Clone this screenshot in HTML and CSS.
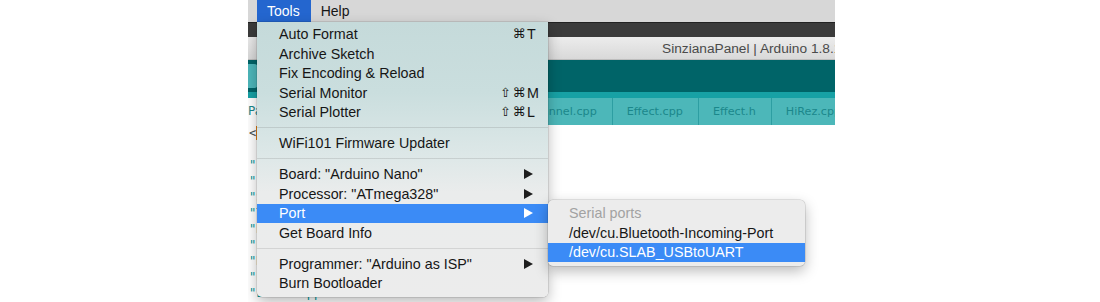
FILE: index.html
```html
<!DOCTYPE html>
<html lang="en">
<head>
  <meta charset="UTF-8" />
  <title>Arduino Tools menu</title>
  <link rel="stylesheet" href="styles.css">
</head>
<body>
  <div class="shot">
    <div class="menubar">
      <span class="mb-item active">Tools</span>
      <span class="mb-item">Help</span>
    </div>

    <div class="window">
      <div class="win-strip"></div>
      <div class="titlebar">SinzianaPanel | Arduino 1.8.1</div>
      <div class="toolbar">
        <div class="tb-btn"></div>
      </div>
      <div class="tabs">
        <div class="tab active">Panel</div>
        <div class="tab">Animations.cpp</div>
        <div class="tab">Bitmaps.cpp</div>
        <div class="tab">Channel.cpp</div>
        <div class="tab">Effect.cpp</div>
        <div class="tab">Effect.h</div>
        <div class="tab">HiRez.cpp</div>
      </div>
      <div class="editor">
        <div class="line"><span class="op">&lt;</span><span class="caret">F</span></div>
        <div class="line"></div>
        <div class="line str">"FastLED.h"</div>
        <div class="line str">"--------"</div>
        <div class="line str">"Serial.cpp"</div>
        <div class="line str">"Timer.cpp"</div>
        <div class="line str">"Display.cpp"</div>
        <div class="line str">"Effect.cpp"</div>
        <div class="line str">"HiRez.cpp"</div>
        <div class="line str">"Effect.h"</div>
        <div class="line str">"LEDFX.cpp"</div>
      </div>
    </div>

    <div class="menu">
      <div class="item">Auto Format<span class="keys"><span class="mod">⌘</span><span class="key">T</span></span></div>
      <div class="item">Archive Sketch</div>
      <div class="item">Fix Encoding &amp; Reload</div>
      <div class="item">Serial Monitor<span class="keys"><span class="mod">⇧⌘</span><span class="key">M</span></span></div>
      <div class="item">Serial Plotter<span class="keys"><span class="mod">⇧⌘</span><span class="key">L</span></span></div>
      <div class="sep"></div>
      <div class="item">WiFi101 Firmware Updater</div>
      <div class="sep"></div>
      <div class="item">Board: "Arduino Nano"<svg class="arrow" width="9" height="10" viewBox="0 0 9 10"><polygon points="0,0 9,5 0,10" /></svg></div>
      <div class="item">Processor: "ATmega328"<svg class="arrow" width="9" height="10" viewBox="0 0 9 10"><polygon points="0,0 9,5 0,10" /></svg></div>
      <div class="item selected">Port<svg class="arrow" width="9" height="10" viewBox="0 0 9 10"><polygon points="0,0 9,5 0,10" /></svg></div>
      <div class="item">Get Board Info</div>
      <div class="sep"></div>
      <div class="item">Programmer: "Arduino as ISP"<svg class="arrow" width="9" height="10" viewBox="0 0 9 10"><polygon points="0,0 9,5 0,10" /></svg></div>
      <div class="item">Burn Bootloader</div>
    </div>

    <div class="submenu">
      <div class="item disabled">Serial ports</div>
      <div class="item">/dev/cu.Bluetooth-Incoming-Port</div>
      <div class="item selected">/dev/cu.SLAB_USBtoUART</div>
    </div>
  </div>
</body>
</html>
```

FILE: styles.css
```css
* {
  box-sizing: border-box;
  margin: 0;
  padding: 0;
}

body {
  background: #fff;
  font-family: 'Liberation Sans', Arial, sans-serif;
  color: #161616;
}

.shot {
  position: relative;
  margin-left: 248px;
  width: 587px;
  height: 302px;
  overflow: hidden;
}

/* top system menu bar */
.menubar {
  display: flex;
  height: 22px;
  padding-left: 9px;
  background: #d7d7d7;
  font-size: 14px;
}

.mb-item {
  padding: 0 10px;
  line-height: 22px;
  color: #161616;
}

.mb-item.active {
  padding-right: 11px;
  background: #2466cf;
  color: #fff;
}

/* arduino window behind the menu */
.win-strip {
  height: 15px;
  background: #3b3b3b;
  border-top: 1px solid #222;
}

.titlebar {
  height: 23px;
  padding-left: 414px;
  background: linear-gradient(#ececec, #d9d9d9);
  border-bottom: 1px solid #bdbdbd;
  font-size: 13.7px;
  line-height: 23px;
  color: #4a4a4a;
  white-space: nowrap;
}

.toolbar {
  display: flex;
  align-items: center;
  height: 32px;
  background: #006468;
}

.tb-btn {
  width: 24px;
  height: 24px;
  margin-left: -14px;
  border-radius: 4px;
  background: #4db7bb;
}

.tabs {
  display: flex;
  height: 33px;
  padding-top: 6px;
  background: #17a1a5;
  white-space: nowrap;
}

.tab {
  height: 27px;
  padding: 0 15px 0 14px;
  background: #4cb7b9;
  border-right: 1px solid #2d9ea2;
  font-family: 'DejaVu Sans', sans-serif;
  font-size: 11.2px;
  line-height: 27px;
  color: #1b878b;
}

.tab.active {
  padding-left: 0;
  background: #fff;
  font-size: 12px;
}

.editor {
  background: #fff;
  font-family: 'DejaVu Sans Mono', monospace;
  font-size: 12px;
  padding-left: 1px;
}

.line {
  height: 16px;
  line-height: 16px;
  white-space: nowrap;
}

.line .op {
  color: #434f54;
}

.line .caret {
  background: #e9800f;
  color: #fff;
}

.str {
  color: #00979c;
}

/* dropdown menus */
.menu {
  position: absolute;
  left: 9px;
  top: 22px;
  width: 291px;
  padding: 2.5px 0 4px;
  border-radius: 0 0 5px 5px;
  background: linear-gradient(#c5dada 0, #cadede 70px, #dce7e7 130px, #eaecec 170px, #ececec 100%);
  box-shadow: 0 0 0 0.5px rgba(0, 0, 0, 0.18), 0 5px 14px rgba(0, 0, 0, 0.28);
  font-size: 14.3px;
}

.item {
  display: flex;
  align-items: center;
  height: 19.5px;
  padding: 0 15px 0 22px;
  white-space: nowrap;
}

.item.selected {
  background: #3b8bf6;
  color: #fff;
}

.item.selected .arrow {
  fill: #fff;
}

.keys {
  display: flex;
  margin-left: auto;
  margin-right: -8px;
  font-family: 'DejaVu Sans', sans-serif;
  font-size: 13px;
}

.mod {
  text-align: right;
  letter-spacing: 1.5px;
}

.key {
  width: 14px;
  font-family: 'Liberation Sans', Arial, sans-serif;
  font-size: 14.3px;
}

.arrow {
  margin-left: auto;
  fill: #1e1e1e;
}

.sep {
  height: 11.5px;
  padding-top: 5px;
}

.sep::after {
  content: '';
  display: block;
  height: 1px;
  background: rgba(0, 0, 0, 0.1);
}

.submenu {
  position: absolute;
  left: 300px;
  top: 200px;
  width: 257px;
  padding: 3.5px 0 4px;
  border-radius: 5px;
  background: #ececec;
  box-shadow: 0 0 0 0.5px rgba(0, 0, 0, 0.18), 0 5px 14px rgba(0, 0, 0, 0.28);
  font-size: 14.3px;
}

.submenu .item {
  padding-left: 21px;
}

.item.disabled {
  color: #a2a2a2;
}
```
